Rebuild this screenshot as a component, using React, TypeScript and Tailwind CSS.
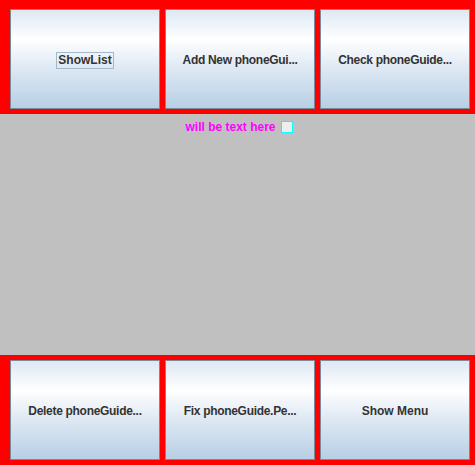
import React from 'react';

const btn =
  "flex-1 h-[100px] flex items-center justify-center pt-[2px] border border-[#7a8a99] bg-[linear-gradient(to_bottom,#dde8f3_0%,#ffffff_30%,#dde8f3_60%,#b8cfe5_100%)] text-[12px] font-bold text-[#333333] whitespace-nowrap";

function App() {
  return (
    <div className="w-[475px] h-[465px] flex flex-col bg-[#c0c0c0] font-['Liberation_Sans',Arial,sans-serif]">
      <div className="h-[114px] bg-[#ff0000] flex gap-[5px] pt-[9px] pl-[10px] pr-[5px] pb-[5px]">
        <button type="button" className={btn}>
          <span className="border border-[#a3b8cc] px-[1px] leading-[15px]">ShowList</span>
        </button>
        <button type="button" className={btn}>
          <span className="tracking-[-0.3px]">Add New phoneGui...</span>
        </button>
        <button type="button" className={btn}>
          <span className="tracking-[-0.3px]">Check phoneGuide...</span>
        </button>
      </div>
      <div className="flex-1 flex justify-center items-start gap-[5px] pt-[6px] pl-[3px]">
        <span className="text-[12px] font-bold text-[#ff00ff] leading-[15px]">will be text here</span>
        <span className="w-[12px] h-[12px] mt-[1px] border border-[#00ffff] bg-[#eeeeee]" />
      </div>
      <div className="h-[110px] bg-[#ff0000] flex gap-[5px] pt-[5px] pl-[10px] pr-[5px] pb-[5px]">
        <button type="button" className={btn}>
          <span className="tracking-[-0.3px]">Delete phoneGuide...</span>
        </button>
        <button type="button" className={btn}>
          <span className="tracking-[-0.3px]">Fix phoneGuide.Pe...</span>
        </button>
        <button type="button" className={btn}>Show Menu</button>
      </div>
    </div>
  );
}

export default App;
